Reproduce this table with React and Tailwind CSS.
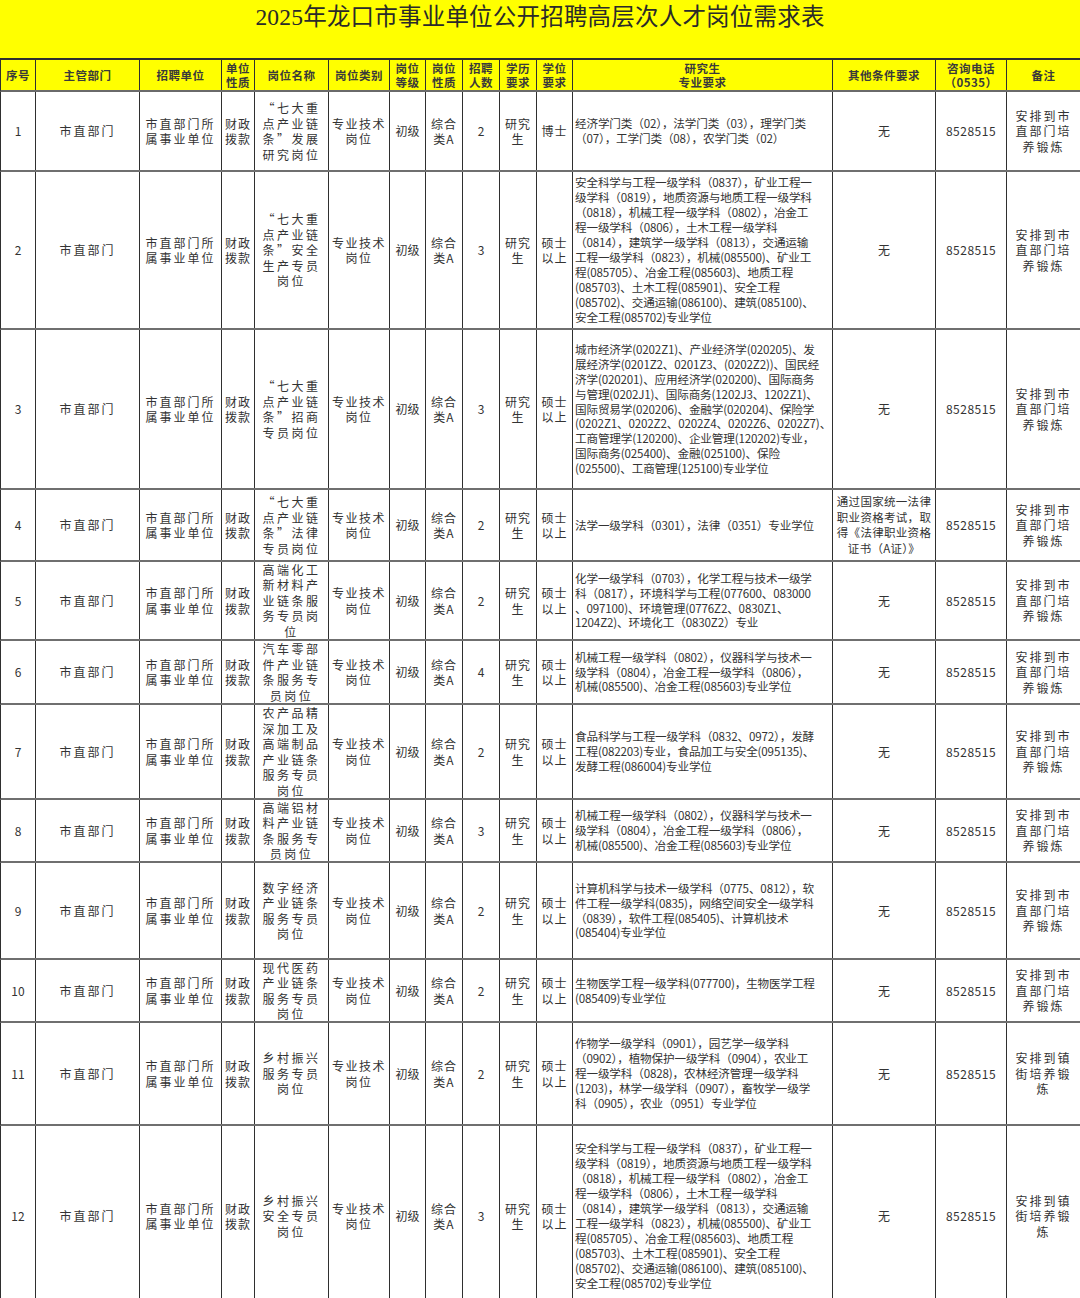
import React from "react";

const cols =
  "grid grid-cols-[35px_104px_82px_33px_74px_61px_36px_37px_37px_37px_36px_260px_103px_71px_74px]";

const FONT = { fontFamily: '"Noto Sans CJK SC", "Noto Sans", sans-serif' };

const SAFETY = [
  "安全科学与工程一级学科（0837），矿业工程一",
  "级学科（0819），地质资源与地质工程一级学科",
  "（0818），机械工程一级学科（0802），冶金工",
  "程一级学科（0806），土木工程一级学科",
  "（0814），建筑学一级学科（0813），交通运输",
  "工程一级学科（0823），机械(085500)、矿业工",
  "程(085705）、冶金工程(085603)、地质工程",
  "(085703)、土木工程(085901)、安全工程",
  "(085702)、交通运输(086100)、建筑(085100)、",
  "安全工程(085702)专业学位",
];

const MECH = [
  "机械工程一级学科（0802），仪器科学与技术一",
  "级学科（0804），冶金工程一级学科（0806），",
  "机械(085500)、冶金工程(085603)专业学位",
];

const CITY = ["安排到市", "直部门培", "养锻炼"];
const TOWN = ["安排到镇", "街培养锻", "炼"];

const rows = [
  {
    h: "h-[80px]",
    name: ["“七大重", "点产业链", "条”发展", "研究岗位"],
    n: 2,
    deg: ["博士"],
    major: ["经济学门类（02），法学门类（03），理学门类", "（07），工学门类（08），农学门类（02）"],
    note: CITY,
  },
  { h: "h-[158px]", name: ["“七大重", "点产业链", "条”安全", "生产专员", "岗位"], n: 3, major: SAFETY, note: CITY },
  {
    h: "h-[160px]",
    name: ["“七大重", "点产业链", "条”招商", "专员岗位"],
    n: 3,
    major: [
      "城市经济学(0202Z1)、产业经济学(020205)、发",
      "展经济学(0201Z2、0201Z3、(0202Z2))、国民经",
      "济学(020201)、应用经济学(020200)、国际商务",
      "与管理(0202J1)、国际商务(1202J3、1202Z1)、",
      "国际贸易学(020206)、金融学(020204)、保险学",
      "(0202Z1、0202Z2、0202Z4、0202Z6、0202Z7)、",
      "工商管理学(120200)、企业管理(120202)专业，",
      "国际商务(025400)、金融(025100)、保险",
      "(025500)、工商管理(125100)专业学位",
    ],
    note: CITY,
  },
  {
    h: "h-[72px]",
    name: ["“七大重", "点产业链", "条”法律", "专员岗位"],
    n: 2,
    major: ["法学一级学科（0301），法律（0351）专业学位"],
    other: ["通过国家统一法律", "职业资格考试，取", "得《法律职业资格", "证书（A证）》"],
    note: CITY,
  },
  {
    h: "h-[79px]",
    name: ["高端化工", "新材料产", "业链条服", "务专员岗", "位"],
    n: 2,
    major: [
      "化学一级学科（0703），化学工程与技术一级学",
      "科（0817），环境科学与工程(077600、083000",
      "、097100)、环境管理(0776Z2、0830Z1、",
      "1204Z2)、环境化工（0830Z2）专业",
    ],
    note: CITY,
  },
  { h: "h-[64px]", name: ["汽车零部", "件产业链", "条服务专", "员岗位"], n: 4, major: MECH, note: CITY },
  {
    h: "h-[95px]",
    name: ["农产品精", "深加工及", "高端制品", "产业链条", "服务专员", "岗位"],
    n: 2,
    major: [
      "食品科学与工程一级学科（0832、0972），发酵",
      "工程(082203)专业，食品加工与安全(095135)、",
      "发酵工程(086004)专业学位",
    ],
    note: CITY,
  },
  { h: "h-[63px]", name: ["高端铝材", "料产业链", "条服务专", "员岗位"], n: 3, major: MECH, note: CITY },
  {
    h: "h-[97px]",
    name: ["数字经济", "产业链条", "服务专员", "岗位"],
    n: 2,
    major: [
      "计算机科学与技术一级学科（0775、0812），软",
      "件工程一级学科(0835)，网络空间安全一级学科",
      "（0839），软件工程(085405)、计算机技术",
      "(085404)专业学位",
    ],
    note: CITY,
  },
  {
    h: "h-[63px]",
    name: ["现代医药", "产业链条", "服务专员", "岗位"],
    n: 2,
    major: ["生物医学工程一级学科(077700)，生物医学工程", "(085409)专业学位"],
    note: CITY,
  },
  {
    h: "h-[103px]",
    name: ["乡村振兴", "服务专员", "岗位"],
    n: 2,
    major: [
      "作物学一级学科（0901），园艺学一级学科",
      "（0902），植物保护一级学科（0904），农业工",
      "程一级学科（0828)，农林经济管理一级学科",
      "(1203)，林学一级学科（0907），畜牧学一级学",
      "科（0905），农业（0951）专业学位",
    ],
    note: TOWN,
  },
  { h: "h-[182px]", name: ["乡村振兴", "安全专员", "岗位"], n: 3, major: SAFETY, note: TOWN },
];

const Lines = ({ lines }) =>
  lines.map((l, i) => (
    <div key={i} className="whitespace-nowrap">
      {l}
    </div>
  ));

const Cell = ({ children, className = "" }) => (
  <div
    className={
      "flex flex-col items-center justify-center overflow-hidden border-r border-[#2f2f2f] text-center " +
      className
    }
  >
    {children}
  </div>
);

const headers = [
  ["序号"],
  ["主管部门"],
  ["招聘单位"],
  ["单位", "性质"],
  ["岗位名称"],
  ["岗位类别"],
  ["岗位", "等级"],
  ["岗位", "性质"],
  ["招聘", "人数"],
  ["学历", "要求"],
  ["学位", "要求"],
  ["研究生", "专业要求"],
  ["其他条件要求"],
  ["咨询电话", "（0535）"],
  ["备注"],
];

export default function App() {
  return (
    <div className="w-[1080px] bg-white text-[#333]" style={FONT}>
      <div className="flex h-[58px] justify-center bg-[#ffff00] pt-[2px]">
        <h1
          className="text-[23.5px] leading-[30px] tracking-[0.2px] text-[#2a2a2a]"
          style={{ fontFamily: '"Liberation Serif", "Noto Sans CJK SC", serif' }}
        >
          2025年龙口市事业单位公开招聘高层次人才岗位需求表
        </h1>
      </div>

      <div className={cols + " h-[34px] border-t-2 border-b-2 border-l border-t-[#2f2f2f] border-b-[#6a6a6a] border-l-[#2f2f2f] bg-[#ffff00]"}>
        {headers.map((h, i) => (
          <Cell key={i} className="text-[11.5px] leading-[14px] font-semibold text-[#3a3a3a] tracking-[0.5px]">
            <Lines lines={h} />
          </Cell>
        ))}
      </div>

      {rows.map((r, i) => (
        <div
          key={i}
          className={cols + " " + r.h + " border-b-2 border-l border-b-[#6f6f6f] border-l-[#2f2f2f] text-[12px] leading-[15.5px]"}
        >
          <Cell>{i + 1}</Cell>
          <Cell className="tracking-[2px]">市直部门</Cell>
          <Cell className="tracking-[2px]">
            <Lines lines={["市直部门所", "属事业单位"]} />
          </Cell>
          <Cell className="tracking-[1px]">
            <Lines lines={["财政", "拨款"]} />
          </Cell>
          <Cell className="tracking-[2.5px]">
            <Lines lines={r.name} />
          </Cell>
          <Cell className="tracking-[1.5px]">
            <Lines lines={["专业技术", "岗位"]} />
          </Cell>
          <Cell>初级</Cell>
          <Cell className="tracking-[1px]">
            <Lines lines={["综合", "类A"]} />
          </Cell>
          <Cell>{r.n}</Cell>
          <Cell className="tracking-[1px]">
            <Lines lines={["研究", "生"]} />
          </Cell>
          <Cell className="tracking-[1px]">
            <Lines lines={r.deg || ["硕士", "以上"]} />
          </Cell>
          <Cell className="!items-start pl-[2px] text-left text-[11.6px] leading-[14.9px] tracking-[-0.15px]">
            <Lines lines={r.major} />
          </Cell>
          <Cell className={r.other ? "text-[11.5px] leading-[15.5px] tracking-[0.3px]" : ""}>
            <Lines lines={r.other || ["无"]} />
          </Cell>
          <Cell className="tracking-[0.5px]">8528515</Cell>
          <Cell className="tracking-[2px] leading-[15.5px]">
            <Lines lines={r.note} />
          </Cell>
        </div>
      ))}
    </div>
  );
}
